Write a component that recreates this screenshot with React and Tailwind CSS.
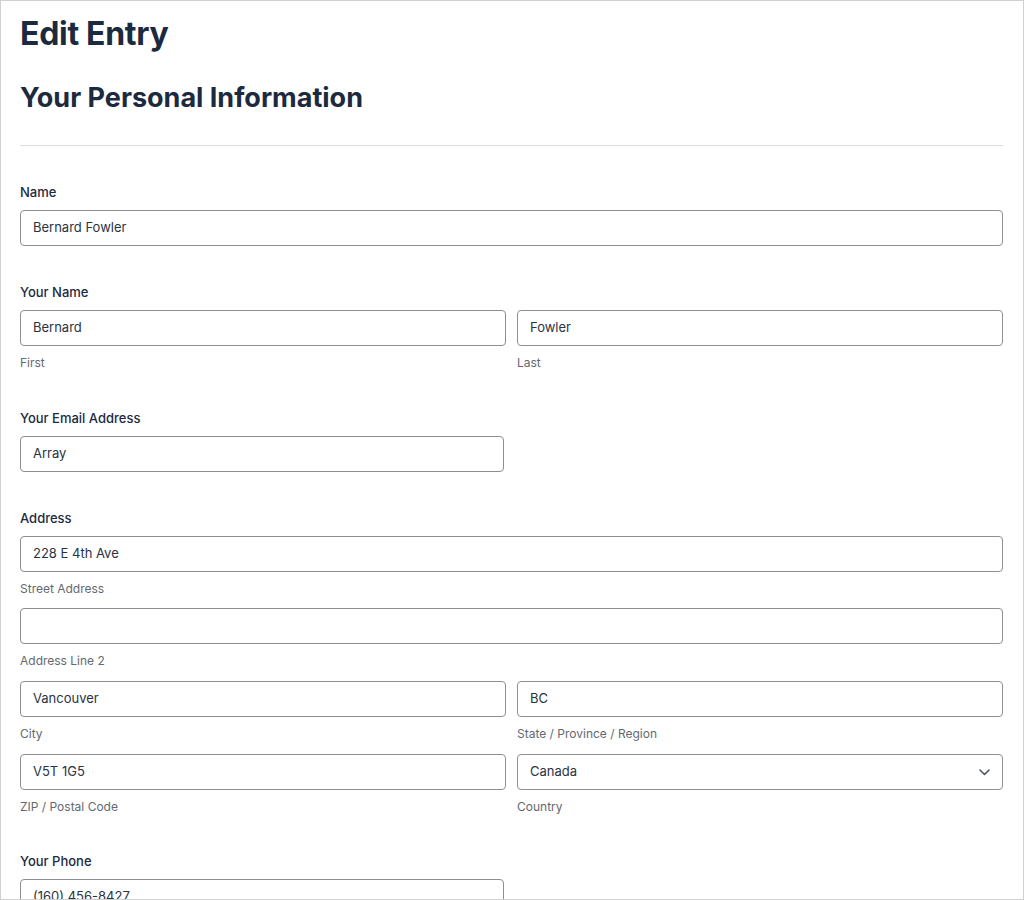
import React from "react";

const font = { fontFamily: "Inter, 'Noto Sans', sans-serif" };

function Label({ children }) {
  return <div className="text-[13px] leading-[20px] font-medium text-[#1c2a40] mb-[8px]">{children}</div>;
}

function Sub({ children }) {
  return <div className="text-[12px] leading-[18px] text-[#646970] mt-[8px]">{children}</div>;
}

function Input({ value, className = "" }) {
  return (
    <div className={"h-[36px] border border-[#8c8f94] rounded-[4px] bg-white flex items-center px-[12px] text-[13px] text-[#2a3342] " + className}>
      {value}
    </div>
  );
}

function Select({ value }) {
  return (
    <div className="h-[36px] border border-[#8c8f94] rounded-[4px] bg-white flex items-center justify-between pl-[12px] pr-[12px] text-[13px] text-[#2a3342]">
      <span>{value}</span>
      <svg width="11" height="7" viewBox="0 0 11 7" fill="none">
        <path d="M1 1l4.5 4.5L10 1" stroke="#50575e" strokeWidth="1.6" strokeLinecap="round" strokeLinejoin="round" />
      </svg>
    </div>
  );
}

export default function App() {
  return (
    <div style={font} className="w-[1024px] h-[900px] overflow-hidden bg-white border border-[#d0d0d0] pl-[19px] pr-[20px]">
      <h1 className="mt-[13px] text-[32px] leading-[40px] font-bold text-[#1c2a40] tracking-[-0.3px]">Edit Entry</h1>
      <h2 className="mt-[28px] text-[27px] leading-[32px] font-bold text-[#1c2a40]">Your Personal Information</h2>
      <div className="mt-[31px] h-px bg-[#dcdcde]" />

      <div className="mt-[36px]">
        <Label>Name</Label>
        <Input value="Bernard Fowler" />
      </div>

      <div className="mt-[36px]">
        <Label>Your Name</Label>
        <div className="grid grid-cols-2 gap-x-[11px]">
          <div>
            <Input value="Bernard" />
            <Sub>First</Sub>
          </div>
          <div>
            <Input value="Fowler" />
            <Sub>Last</Sub>
          </div>
        </div>
      </div>

      <div className="mt-[36px]">
        <Label>Your Email Address</Label>
        <Input value="Array" className="w-[484px]" />
      </div>

      <div className="mt-[36px]">
        <Label>Address</Label>
        <div className="flex flex-col">
          <div>
            <Input value="228 E 4th Ave" />
            <Sub>Street Address</Sub>
          </div>
          <div className="mt-[10px]">
            <Input value="" />
            <Sub>Address Line 2</Sub>
          </div>
          <div className="mt-[11px] grid grid-cols-2 gap-x-[11px]">
            <div>
              <Input value="Vancouver" />
              <Sub>City</Sub>
            </div>
            <div>
              <Input value="BC" />
              <Sub>State / Province / Region</Sub>
            </div>
          </div>
          <div className="mt-[11px] grid grid-cols-2 gap-x-[11px]">
            <div>
              <Input value="V5T 1G5" />
              <Sub>ZIP / Postal Code</Sub>
            </div>
            <div>
              <Select value="Canada" />
              <Sub>Country</Sub>
            </div>
          </div>
        </div>
      </div>

      <div className="mt-[35px]">
        <Label>Your Phone</Label>
        <Input value="(160) 456-8427" className="w-[484px]" />
      </div>
    </div>
  );
}
